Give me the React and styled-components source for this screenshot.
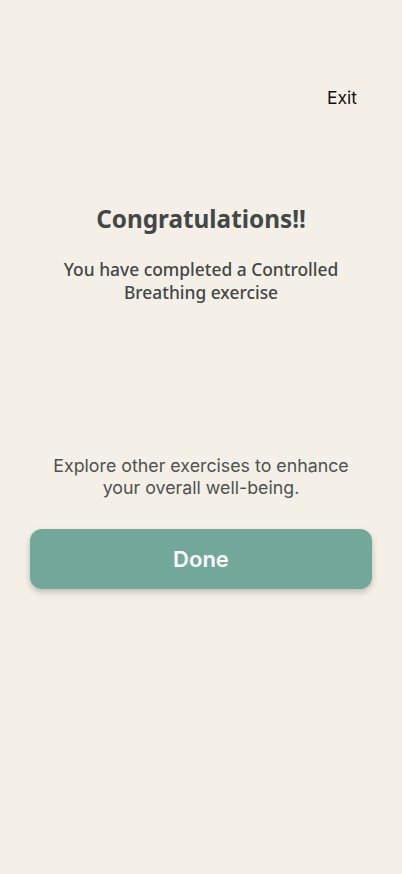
import styled, { createGlobalStyle } from 'styled-components';

const GlobalStyle = createGlobalStyle`
    html, body {
        margin: 0;
        padding: 0;
        background: #f4f0e7;
    }
    * {
        box-sizing: border-box;
    }
`;

const Screen = styled.div`
    width: 402px;
    min-height: 874px;
    background: #f4f0e7;
    display: flex;
    flex-direction: column;
`;

const TopBar = styled.div`
    display: flex;
    justify-content: flex-end;
    padding: 86px 45px 0 0;
`;

const ExitButton = styled.button`
    border: none;
    background: none;
    padding: 0;
    font-family: 'Inter', 'Liberation Sans', sans-serif;
    font-size: 17.5px;
    color: #111;
    line-height: 24px;
    cursor: pointer;
`;

const Header = styled.div`
    display: flex;
    flex-direction: column;
    align-items: center;
    text-align: center;
    padding: 0 30px;
    margin-top: 93px;
`;

const Title = styled.h1`
    margin: 0;
    font-family: 'Noto Sans', sans-serif;
    font-size: 24.3px;
    font-weight: 700;
    line-height: 32px;
    color: #434745;
`;

const Subtitle = styled.p`
    margin: 23px 0 0;
    font-family: 'Noto Sans', sans-serif;
    font-size: 17.4px;
    font-weight: 550;
    line-height: 23px;
    color: #434745;
`;

const Footer = styled.div`
    display: flex;
    flex-direction: column;
    align-items: center;
    padding: 0 30px;
    margin-top: 151px;
`;

const Note = styled.p`
    margin: 0;
    text-align: center;
    font-family: 'Inter', 'Liberation Sans', sans-serif;
    font-size: 17.8px;
    line-height: 22px;
    color: #4f5250;
`;

const DoneButton = styled.button`
    margin-top: 30px;
    width: 100%;
    height: 60px;
    border: none;
    border-radius: 12px;
    background: #71a899;
    box-shadow: 0 3px 6px rgba(0, 0, 0, 0.22);
    font-family: 'Inter', 'Liberation Sans', sans-serif;
    font-size: 22px;
    font-weight: 600;
    color: #ffffff;
    cursor: pointer;
`;

const App = () => {
    return (
        <Screen>
            <GlobalStyle />
            <TopBar>
                <ExitButton>Exit</ExitButton>
            </TopBar>
            <Header>
                <Title>Congratulations!!</Title>
                <Subtitle>
                    You have completed a Controlled
                    <br />
                    Breathing exercise
                </Subtitle>
            </Header>
            <Footer>
                <Note>
                    Explore other exercises to enhance
                    <br />
                    your overall well-being.
                </Note>
                <DoneButton>Done</DoneButton>
            </Footer>
        </Screen>
    );
};

export default App;
